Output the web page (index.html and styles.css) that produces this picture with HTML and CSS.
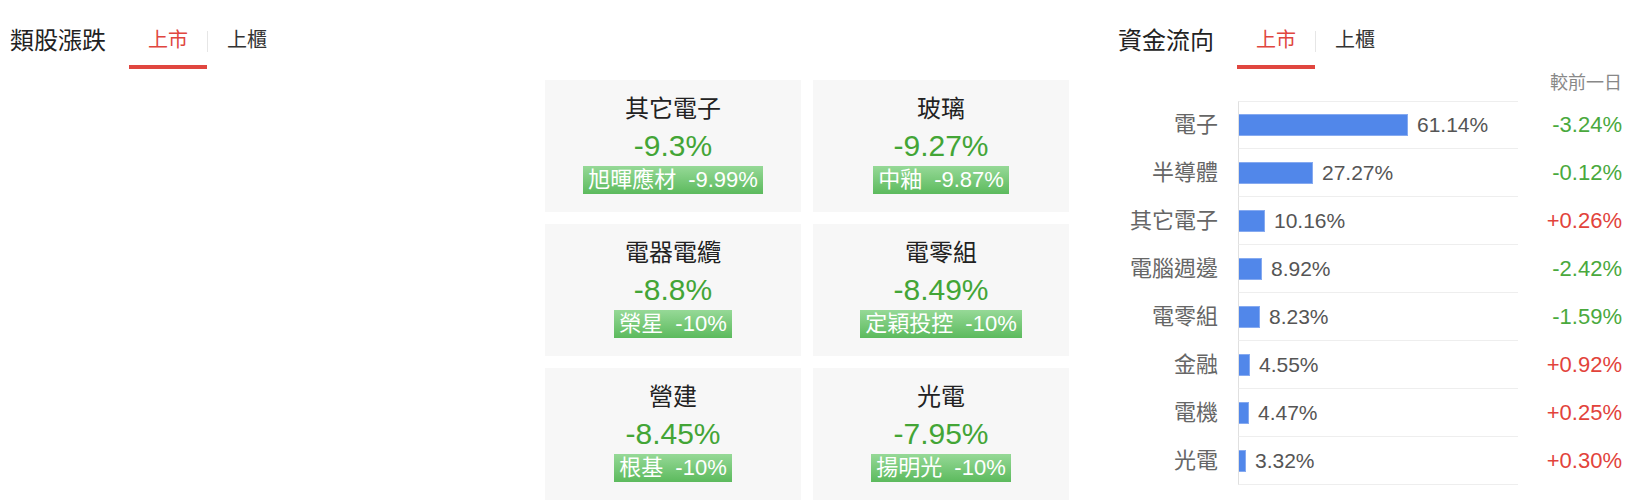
FILE: index.html
```html
<!DOCTYPE html>
<html lang="zh-Hant">

<head>
  <meta charset="utf-8">
  <title>類股漲跌・資金流向</title>
  <meta name="viewport" content="width=device-width, initial-scale=1">
  <link rel="stylesheet" href="styles.css">
</head>

<body>
  <div class="board">

    <!-- 類股漲跌 -->
    <div class="sector">
      <div class="panel-head">
        <h2 class="panel-title">類股漲跌</h2>
        <span class="tab active">上市</span>
        <span class="tab-sep"></span>
        <span class="tab">上櫃</span>
      </div>

      <div class="sector-body">
        <div class="cards">
          <div class="card">
            <p class="card-name">其它電子</p>
            <p class="card-chg">-9.3%</p>
            <p class="card-lead">旭暉應材<span>-9.99%</span></p>
          </div>
          <div class="card">
            <p class="card-name">玻璃</p>
            <p class="card-chg">-9.27%</p>
            <p class="card-lead">中釉<span>-9.87%</span></p>
          </div>
          <div class="card">
            <p class="card-name">電器電纜</p>
            <p class="card-chg">-8.8%</p>
            <p class="card-lead">榮星<span>-10%</span></p>
          </div>
          <div class="card">
            <p class="card-name">電零組</p>
            <p class="card-chg">-8.49%</p>
            <p class="card-lead">定穎投控<span>-10%</span></p>
          </div>
          <div class="card">
            <p class="card-name">營建</p>
            <p class="card-chg">-8.45%</p>
            <p class="card-lead">根基<span>-10%</span></p>
          </div>
          <div class="card">
            <p class="card-name">光電</p>
            <p class="card-chg">-7.95%</p>
            <p class="card-lead">揚明光<span>-10%</span></p>
          </div>
        </div>
      </div>
    </div>

    <!-- 資金流向 -->
    <div class="flow">
      <div class="panel-head">
        <h2 class="panel-title">資金流向</h2>
        <span class="tab active">上市</span>
        <span class="tab-sep"></span>
        <span class="tab">上櫃</span>
      </div>

      <div class="flow-cap">較前一日</div>
      <div class="flow-rows">
        <div class="flow-row">
          <span class="flow-name">電子</span>
          <div class="flow-track"><i class="flow-bar" style="width:169px"></i><span class="flow-pct">61.14%</span></div>
          <span class="flow-chg down">-3.24%</span>
        </div>
        <div class="flow-row">
          <span class="flow-name">半導體</span>
          <div class="flow-track"><i class="flow-bar" style="width:74px"></i><span class="flow-pct">27.27%</span></div>
          <span class="flow-chg down">-0.12%</span>
        </div>
        <div class="flow-row">
          <span class="flow-name">其它電子</span>
          <div class="flow-track"><i class="flow-bar" style="width:26px"></i><span class="flow-pct">10.16%</span></div>
          <span class="flow-chg up">+0.26%</span>
        </div>
        <div class="flow-row">
          <span class="flow-name">電腦週邊</span>
          <div class="flow-track"><i class="flow-bar" style="width:23px"></i><span class="flow-pct">8.92%</span></div>
          <span class="flow-chg down">-2.42%</span>
        </div>
        <div class="flow-row">
          <span class="flow-name">電零組</span>
          <div class="flow-track"><i class="flow-bar" style="width:21px"></i><span class="flow-pct">8.23%</span></div>
          <span class="flow-chg down">-1.59%</span>
        </div>
        <div class="flow-row">
          <span class="flow-name">金融</span>
          <div class="flow-track"><i class="flow-bar" style="width:11px"></i><span class="flow-pct">4.55%</span></div>
          <span class="flow-chg up">+0.92%</span>
        </div>
        <div class="flow-row">
          <span class="flow-name">電機</span>
          <div class="flow-track"><i class="flow-bar" style="width:10px"></i><span class="flow-pct">4.47%</span></div>
          <span class="flow-chg up">+0.25%</span>
        </div>
        <div class="flow-row">
          <span class="flow-name">光電</span>
          <div class="flow-track"><i class="flow-bar" style="width:7px"></i><span class="flow-pct">3.32%</span></div>
          <span class="flow-chg up">+0.30%</span>
        </div>
      </div>
    </div>

  </div>
</body>
</html>
```

FILE: styles.css
```css
body {
  margin: 0;
  font-family: "Liberation Sans", "Noto Sans CJK TC", sans-serif;
  color: #333;
  background: #fff;
}
.board {
  display: flex;
}

/* 見出し＋タブ */
.panel-head {
  display: flex;
  align-items: flex-start;
  height: 47px;
  padding-top: 22px;
}
.panel-title {
  margin: 2px 23px 0 0;
  font-size: 24px;
  font-weight: normal;
  line-height: 34px;
  color: #222;
}
.tab {
  padding: 0 19px 7px;
  font-size: 20px;
  line-height: 36px;
  color: #333;
  border-bottom: 4px solid transparent;
}
.tab.active {
  color: #e0463f;
  border-bottom-color: #e0463f;
}
.tab-sep {
  width: 1px;
  height: 21px;
  margin-top: 9px;
  background: #e6e6e6;
}

/* 類股漲跌 */
.sector {
  width: 1069px;
  padding-left: 10px;
  box-sizing: border-box;
}
.sector-body {
  display: flex;
  justify-content: flex-end;
  margin-top: 11px;
}
.cards {
  display: grid;
  grid-template-columns: repeat(2, 256px);
  grid-auto-rows: 132px;
  gap: 12px;
}
.card {
  display: flex;
  flex-direction: column;
  align-items: center;
  padding-top: 12px;
  box-sizing: border-box;
  background: #f7f7f7;
}
.card p {
  margin: 0;
}
.card-name {
  font-size: 24px;
  line-height: 34px;
  color: #222;
}
.card-chg {
  font-size: 30px;
  line-height: 40px;
  color: #43a536;
}
.card-lead {
  padding: 0 5px;
  font-size: 22px;
  line-height: 28px;
  color: #fff;
  background: linear-gradient(#96d997, #5cba5d);
}
.card-lead span {
  margin-left: 12px;
}

/* 資金流向 */
.flow {
  width: 571px;
  padding: 0 18px 0 49px;
  box-sizing: border-box;
}
.flow-cap {
  margin-bottom: 4px;
  text-align: right;
  font-size: 18px;
  line-height: 28px;
  color: #888;
}
.flow-row {
  display: flex;
  height: 48px;
}
.flow-name {
  width: 100px;
  margin-right: 20px;
  text-align: right;
  font-size: 22px;
  line-height: 48px;
  color: #666;
}
.flow-track {
  display: flex;
  align-items: center;
  width: 280px;
  box-sizing: border-box;
  border-left: 1px solid #e0e0e0;
  border-bottom: 1px solid #eee;
}
.flow-row:first-child .flow-track {
  border-top: 1px solid #eee;
}
.flow-bar {
  height: 22px;
  box-sizing: border-box;
  background: #5187ea;
  border: 1px solid #86aaf0;
  border-left: none;
}
.flow-pct {
  margin-left: 9px;
  font-size: 21px;
  color: #555;
}
.flow-chg {
  flex: 1;
  text-align: right;
  font-size: 22px;
  line-height: 48px;
}
.up {
  color: #e2433b;
}
.down {
  color: #4aa93d;
}
```
